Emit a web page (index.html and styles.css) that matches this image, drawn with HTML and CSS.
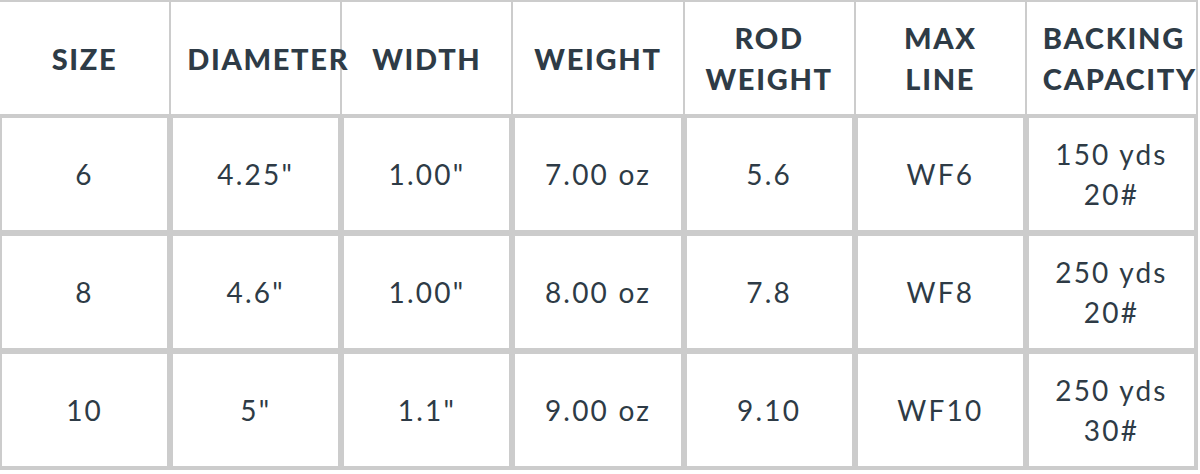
FILE: index.html
```html
<!DOCTYPE html>
<html lang="en">
<head>
<meta charset="utf-8">
<title>Reel Specs</title>
<link rel="stylesheet" href="styles.css">
</head>
<body>
<table class="specs">
  <thead>
    <tr>
      <th>SIZE</th>
      <th>DIAMETER</th>
      <th>WIDTH</th>
      <th>WEIGHT</th>
      <th>ROD<br>WEIGHT</th>
      <th>MAX<br>LINE</th>
      <th>BACKING<br>CAPACITY</th>
    </tr>
  </thead>
  <tbody>
    <tr>
      <td>6</td>
      <td>4.25"</td>
      <td>1.00"</td>
      <td>7.00 oz</td>
      <td>5.6</td>
      <td>WF6</td>
      <td>150 yds<br>20#</td>
    </tr>
    <tr>
      <td>8</td>
      <td>4.6"</td>
      <td>1.00"</td>
      <td>8.00 oz</td>
      <td>7.8</td>
      <td>WF8</td>
      <td>250 yds<br>20#</td>
    </tr>
    <tr>
      <td>10</td>
      <td>5"</td>
      <td>1.1"</td>
      <td>9.00 oz</td>
      <td>9.10</td>
      <td>WF10</td>
      <td>250 yds<br>30#</td>
    </tr>
  </tbody>
</table>
</body>
</html>
```

FILE: styles.css
```css
html, body {
  margin: 0;
  padding: 0;
  background: #ffffff;
}

body {
  overflow: hidden;
  font-family: "Lato", "Open Sans", sans-serif;
  color: #2e3b46;
}

.specs {
  width: 1200px;
  margin-left: -2px;
  table-layout: fixed;
  border-collapse: separate;
  border-spacing: 0;
  border: 1px solid #cccccc;
}

.specs th {
  border: 1px solid #cccccc;
  height: 112px;
  padding: 0 16px;
  font-size: 29px;
  line-height: 41px;
  font-weight: 900;
  letter-spacing: 1.7px;
  text-align: center;
  vertical-align: middle;
  white-space: nowrap;
  box-sizing: content-box;
}

.specs td {
  border: 3px solid #cccccc;
  height: 112px;
  padding: 0 10px;
  font-size: 28px;
  line-height: 40px;
  font-weight: 400;
  letter-spacing: 2.2px;
  text-align: center;
  vertical-align: middle;
  box-sizing: content-box;
}
```
